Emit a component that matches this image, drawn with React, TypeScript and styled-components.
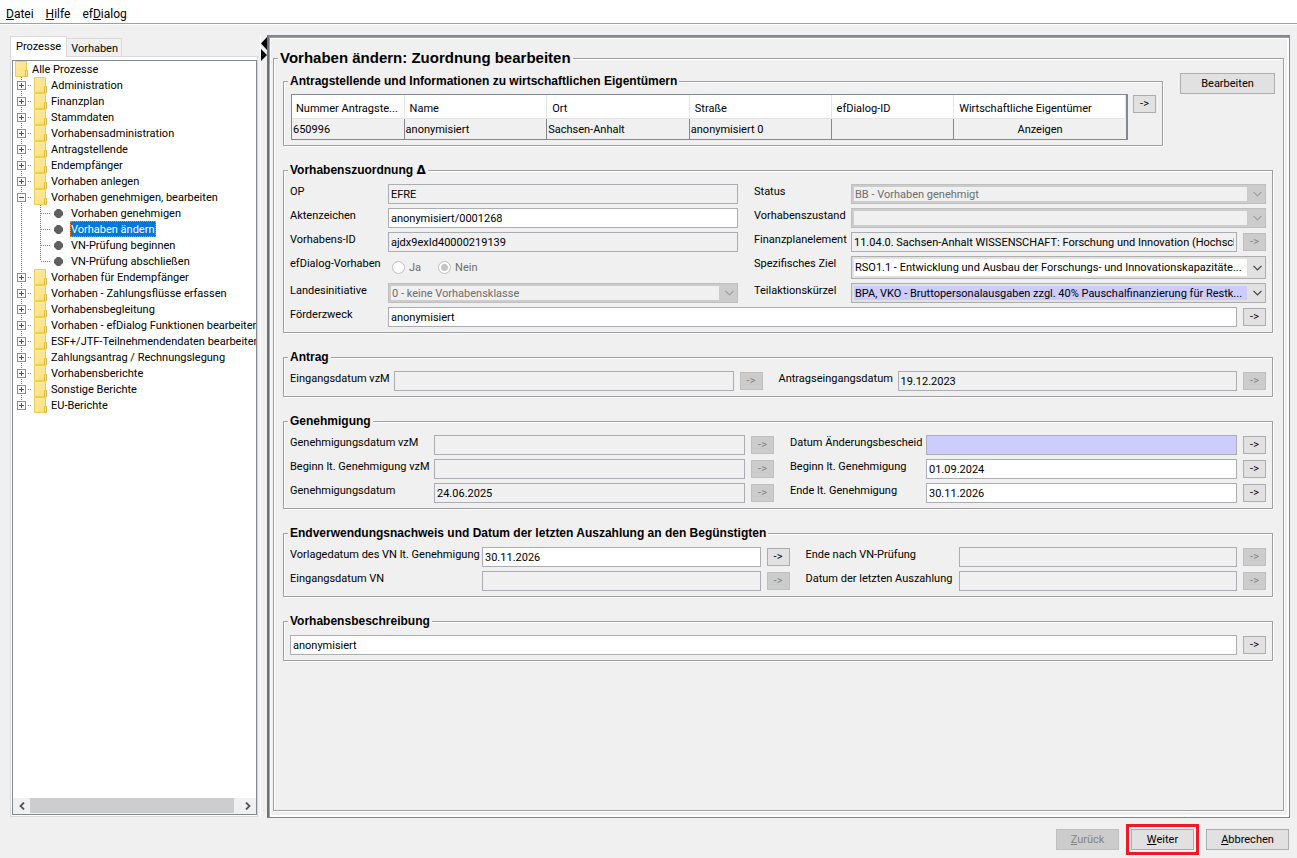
import React from "react";
import styled, { createGlobalStyle, css } from "styled-components";

const GlobalStyle = createGlobalStyle`
  *, *::before, *::after { box-sizing: border-box; }
  body {
    margin: 0;
    background: #f0f0f0;
    color: #000;
    font-family: Roboto, "Liberation Sans", sans-serif;
    font-size: 11px;
    line-height: 14px;
  }
  button, input, select, table { font: inherit; color: inherit; }
`;

/* ---------- window frame ---------- */

const Window = styled.div`
  display: flex;
  flex-direction: column;
  min-height: 100vh;
`;

const MenuBar = styled.nav`
  display: flex;
  gap: 12px;
  height: 24px;
  padding: 4px 6px 0;
  background: #fff;
  border-bottom: 1px solid #a0a0a0;
  box-shadow: 0 1px 0 #fff;
`;

const MenuItem = styled.button`
  padding: 0;
  border: 0;
  background: none;
  font-size: 12px;
  line-height: 20px;
`;

const Workspace = styled.main`
  flex: 1;
  display: flex;
  padding: 11px 7px 0 10px;
`;

const Footer = styled.footer`
  display: flex;
  justify-content: flex-end;
  gap: 12px;
  padding: 11px 8px 8px;
`;

/* ---------- buttons ---------- */

const Button = styled.button<{ $width: number; $marked?: boolean }>`
  width: ${(p) => p.$width}px;
  height: 21px;
  padding: 0;
  flex: none;
  background: #e1e1e1;
  border: 1px solid #adadad;
  ${(p) =>
    p.$marked &&
    css`
      outline: 3px solid #ed1c24;
      outline-offset: 2px;
    `}
  &:disabled {
    background: #ccc;
    border-color: #bfbfbf;
    color: #838383;
  }
`;

const ArrowButton = styled(Button).attrs({ $width: 23, children: "->" })`
  height: 18px;
  line-height: 14px;
`;

/* ---------- navigation tree ---------- */

const Sidebar = styled.aside`
  display: flex;
  flex-direction: column;
  width: 248px;
  flex: none;
  margin: 1px 0 1px;
`;

const Tabs = styled.div`
  display: flex;
  align-items: flex-end;
  height: 20px;
`;

const Tab = styled.button<{ $active?: boolean }>`
  height: ${(p) => (p.$active ? 21 : 18)}px;
  margin-bottom: ${(p) => (p.$active ? -1 : 0)}px;
  padding: ${(p) => (p.$active ? "0 5px 1px" : "2px 3px 0 4px")};
  border: 1px solid #d9d9d9;
  border-bottom: 0;
  border-left-width: ${(p) => (p.$active ? 1 : 0)}px;
  background: ${(p) => (p.$active ? "#fff" : "#f0f0f0")};
  z-index: ${(p) => (p.$active ? 1 : 0)};
`;

const TabPane = styled.div`
  flex: 1;
  display: flex;
  padding: 3px 0 1px 1px;
  background: #fff;
  border: 1px solid #d9d9d9;
`;

const TreeFrame = styled.div`
  flex: 1;
  min-width: 0;
  display: flex;
  flex-direction: column;
  border: 1px solid #828790;
  background: #fff;
`;

const Tree = styled.ul`
  flex: 1;
  margin: 0;
  padding: 0;
  list-style: none;
  overflow: hidden;
`;

const Branch = styled.ul`
  margin: 0;
  padding: 0;
  list-style: none;
`;

const TreeRow = styled.div`
  display: flex;
  align-items: center;
  height: 16px;
  white-space: nowrap;
  svg { flex: none; }
`;

const TreeText = styled.span`
  padding: 2px 3px 0 4px;
`;

const LeafText = styled.span<{ $selected?: boolean }>`
  margin-left: 6px;
  padding: 2px 1px 0;
  ${(p) =>
    p.$selected &&
    css`
      background: #0078d7;
      color: #fff;
      outline: 1px dotted #ff8728;
      outline-offset: -1px;
    `}
`;

const ScrollBar = styled.div`
  display: flex;
  height: 16px;
  background: #f0f0f0;
`;

const ScrollButton = styled.button`
  display: grid;
  place-items: center;
  width: 17px;
  padding: 0;
  border: 0;
  background: none;
`;

const ScrollTrack = styled.div`
  flex: 1;
  padding-right: 5px;
`;

const ScrollThumb = styled.div`
  height: 15px;
  background: #cdcdcd;
`;

const Divider = styled.div`
  width: 9px;
  flex: none;
  padding-left: 2px;
  svg { display: block; }
`;

const DividerLine = styled.div`
  height: 100%;
  border-left: 1px solid #fff;
`;

/* ---------- group boxes and form parts ---------- */

const Panel = styled.section`
  flex: 1;
  min-width: 0;
  display: flex;
  padding: 12px 5px 6px 4px;
  border: 1px solid #828790;
  border-top-width: 2px;
  border-left: 2px solid #6e7177;
  box-shadow: inset 1px 1px 0 #a0a0a8, inset 2px 2px 0 #fff, inset -2px -2px 0 #fff;
`;

const Group = styled.fieldset<{ $tight?: boolean }>`
  min-width: 0;
  margin: 0;
  padding: ${(p) => (p.$tight ? 5 : 6)}px 6px 5px;
  border: 1px solid #a0a0a0;
  box-shadow: 1px 1px 0 #fff, inset 1px 1px 0 #fff;
`;

const GroupTitle = styled.legend`
  padding: 1px 2px 0;
  margin-left: -2px;
  background: #f0f0f0;
  font: bold 12px/15px "Liberation Sans", Arial, sans-serif;
`;

const Delta = styled.span`
  font-family: "DejaVu Sans", sans-serif;
  line-height: 1;
`;

const Page = styled(Group)`
  flex: 1;
  padding: 6px 8px 8px 9px;
`;

const PageTitle = styled(GroupTitle)`
  margin-left: -5px;
  padding-top: 0;
  font-size: 15px;
  line-height: 18px;
`;

const PageContent = styled.div`
  display: flex;
  flex-direction: column;
  gap: 16px;
`;

const TopRow = styled.div`
  display: flex;
  align-items: flex-start;
  gap: 17px;
  & > fieldset { flex: 1; }
`;

const Wide = styled.div`
  display: flex;
  flex-direction: column;
  gap: 16px;
  margin-right: 2px;
`;

const FieldGrid = styled.div<{ $columns: string }>`
  display: grid;
  grid-template-columns: ${(p) => p.$columns};
  row-gap: 4px;
`;

const Label = styled.label<{ $second?: boolean }>`
  padding-top: 1px;
  padding-left: ${(p) => (p.$second ? 16 : 0)}px;
  white-space: nowrap;
`;

const Caption = styled(Label).attrs({ as: "span" })``;

const FieldBox = styled.div<{ $span?: number }>`
  display: flex;
  align-items: center;
  gap: 6px;
  min-width: 0;
  height: 20px;
  grid-column: span ${(p) => p.$span ?? 1};
`;

const TextInput = styled.input<{ $required?: boolean }>`
  flex: 1;
  min-width: 0;
  height: 20px;
  padding: 0 2px;
  border: 1px solid #abadb3;
  border-radius: 0;
  background: ${(p) => (p.$required ? "#ccccff" : "#fff")};
  &:read-only { background: #f0f0f0; }
`;

const ComboBox = styled.div<{ $tall?: boolean }>`
  display: grid;
  min-width: 0;
  height: ${(p) => (p.$tall ? 23 : 20)}px;
  svg {
    grid-area: 1 / 1;
    place-self: center end;
    margin-right: 4px;
    pointer-events: none;
  }
`;

const Select = styled.select<{ $fill: string }>`
  grid-area: 1 / 1;
  appearance: none;
  min-width: 0;
  width: 100%;
  padding: 1px 19px 0 3px;
  border: 1px solid #adadad;
  border-radius: 0;
  background:
    linear-gradient(${(p) => p.$fill}, ${(p) => p.$fill}) 2px 2px / calc(100% - 20px) calc(100% - 4px) no-repeat,
    #e1e1e1;
  &:disabled {
    opacity: 1;
    border-color: #bfbfbf;
    background-color: #ccc;
    color: #6d6d6d;
  }
`;

const RadioRow = styled.div`
  display: flex;
  align-items: center;
  gap: 17px;
  height: 23px;
  padding-left: 4px;
`;

const RadioLabel = styled.label`
  display: flex;
  align-items: center;
  gap: 4px;
  color: #6d6d6d;
`;

const Radio = styled.input`
  appearance: none;
  width: 13px;
  height: 13px;
  margin: 0;
  border: 1px solid #bfbfbf;
  border-radius: 50%;
  background: #fff;
  &:checked { background: radial-gradient(circle, #c3c3c3 3px, #fff 4px); }
`;

/* ---------- applicant table ---------- */

const TableRow = styled.div`
  display: flex;
  align-items: flex-start;
  gap: 5px;
  margin-left: 1px;
  & > button { margin: 1px 0 0; }
`;

const Table = styled.table`
  flex: 1;
  table-layout: fixed;
  width: 100%;
  height: 46px;
  border: 1px solid #828790;
  border-right-width: 2px;
  border-spacing: 0;
  th {
    height: 24px;
    padding: 4px 3px 0 4px;
    background: #fff;
    border-right: 1px solid #e5e5e5;
    border-bottom: 1px solid #e5e5e5;
    font-weight: normal;
    text-align: left;
    white-space: nowrap;
    overflow: hidden;
    text-overflow: ellipsis;
  }
  th + th { padding-left: 5px; }
  td {
    height: 20px;
    padding: 2px 1px 0;
    border-right: 1px solid #828790;
  }
  td:last-child { border-right: 0; text-align: center; }
`;

/* ---------- drawings ---------- */

const Folder = () => (
  <svg width="13" height="16" viewBox="0 0 13 16">
    <defs>
      <linearGradient id="folderFill" x1="0" y1="0" x2="1" y2="1">
        <stop offset="0" stopColor="#ffeaa6" />
        <stop offset="1" stopColor="#ffe07c" />
      </linearGradient>
    </defs>
    <path d="M.5.5h11v15H.5z" fill="url(#folderFill)" stroke="#efcd58" />
    <path d="M10.5 15.5v-6h2v6z" fill="#ffe58e" stroke="#e8bd3c" />
  </svg>
);

const Rail = ({ box, last }: { box?: "plus" | "minus"; last?: boolean }) => (
  <svg width="21" height="16" viewBox="0 0 21 16" shapeRendering="crispEdges">
    <path d={last ? "M8.5 0v8" : "M8.5 0v16"} stroke="#808080" strokeDasharray="1 1" />
    {box && (
      <>
        <path d="M15 8.5h3" stroke="#808080" strokeDasharray="1 1" />
        <rect x="4.5" y="4.5" width="8" height="8" fill="#f7f7f7" stroke="#919191" />
        <path d={box === "plus" ? "M6 8.5h5M8.5 6v5" : "M6 8.5h5"} stroke="#2f4f9f" />
      </>
    )}
  </svg>
);

const LeafRail = ({ last }: { last?: boolean }) => (
  <svg width="20" height="16" viewBox="0 0 20 16">
    <g shapeRendering="crispEdges" stroke="#808080" strokeDasharray="1 1">
      <path d={last ? "M6.5 0v8" : "M6.5 0v16"} />
      <path d="M7 8.5h9" />
    </g>
  </svg>
);

const Bullet = () => (
  <svg width="10" height="16" viewBox="0 0 10 16">
    <path d="M3 4h3l3 3v3l-3 3H3l-3-3V7z" fill="#606060" />
  </svg>
);

const Chevron = ({ color }: { color: string }) => (
  <svg width="9" height="6" viewBox="0 0 9 6">
    <path d="M.5.8l4 4 4-4" fill="none" stroke={color} strokeWidth="1.2" />
  </svg>
);

const ScrollArrow = ({ right }: { right?: boolean }) => (
  <svg width="6" height="8" viewBox="0 0 6 8">
    <path d={right ? "M1 .5l3.5 3.5L1 7.5" : "M5 .5L1.5 4 5 7.5"} fill="none" stroke="#555" strokeWidth="1.8" />
  </svg>
);

const DividerArrows = () => (
  <svg width="6" height="26" viewBox="0 0 6 26">
    <path d="M6 2v13L0 8.5zM0 14v12l6-6z" fill="#000" />
  </svg>
);

/* ---------- composed controls ---------- */

type FieldProps = {
  id: string;
  label?: string;
  value?: string;
  locked?: boolean;
  required?: boolean;
  second?: boolean;
  span?: number;
  arrow?: "on" | "off";
};

const Field = ({ id, label, value = "", locked, required, second, span, arrow }: FieldProps) => (
  <>
    {label && <Label htmlFor={id} $second={second}>{label}</Label>}
    <FieldBox $span={span}>
      <TextInput id={id} defaultValue={value} readOnly={locked} $required={required} aria-label={label ? undefined : "Vorhabensbeschreibung"} />
      {arrow && <ArrowButton disabled={arrow === "off"} />}
    </FieldBox>
  </>
);

type ComboProps = {
  id: string;
  label: string;
  value?: string;
  disabled?: boolean;
  fill?: string;
  second?: boolean;
  tall?: boolean;
};

const Combo = ({ id, label, value, disabled, fill = "#fff", second, tall }: ComboProps) => (
  <>
    <Label htmlFor={id} $second={second}>{label}</Label>
    <ComboBox $tall={tall}>
      <Select id={id} disabled={disabled} $fill={disabled ? "#f0f0f0" : fill}>
        {value && <option>{value}</option>}
      </Select>
      <Chevron color={disabled ? "#a0a0a0" : "#404040"} />
    </ComboBox>
  </>
);

type Node = { name: string; leaves?: string[] };

const nodes: Node[] = [
  { name: "Administration" },
  { name: "Finanzplan" },
  { name: "Stammdaten" },
  { name: "Vorhabensadministration" },
  { name: "Antragstellende" },
  { name: "Endempfänger" },
  { name: "Vorhaben anlegen" },
  {
    name: "Vorhaben genehmigen, bearbeiten",
    leaves: ["Vorhaben genehmigen", "Vorhaben ändern", "VN-Prüfung beginnen", "VN-Prüfung abschließen"],
  },
  { name: "Vorhaben für Endempfänger" },
  { name: "Vorhaben - Zahlungsflüsse erfassen" },
  { name: "Vorhabensbegleitung" },
  { name: "Vorhaben - efDialog Funktionen bearbeiten" },
  { name: "ESF+/JTF-Teilnehmendendaten bearbeiten" },
  { name: "Zahlungsantrag / Rechnungslegung" },
  { name: "Vorhabensberichte" },
  { name: "Sonstige Berichte" },
  { name: "EU-Berichte" },
];

const RootRow = styled(TreeRow)`
  padding-left: 2px;
`;

const Navigation = () => (
  <Sidebar>
    <Tabs role="tablist">
      <Tab role="tab" aria-selected $active>Prozesse</Tab>
      <Tab role="tab" aria-selected={false}>Vorhaben</Tab>
    </Tabs>
    <TabPane>
      <TreeFrame>
        <Tree>
          <li>
            <RootRow><Folder /><TreeText>Alle Prozesse</TreeText></RootRow>
            <Branch>
              {nodes.map((node, i) => (
                <li key={node.name}>
                  <TreeRow>
                    <Rail box={node.leaves ? "minus" : "plus"} last={i === nodes.length - 1} />
                    <Folder />
                    <TreeText>{node.name}</TreeText>
                  </TreeRow>
                  {node.leaves && (
                    <Branch>
                      {node.leaves.map((leaf, j) => (
                        <li key={leaf}>
                          <TreeRow>
                            <Rail />
                            <LeafRail last={j === node.leaves!.length - 1} />
                            <Bullet />
                            <LeafText $selected={leaf === "Vorhaben ändern"}>{leaf}</LeafText>
                          </TreeRow>
                        </li>
                      ))}
                    </Branch>
                  )}
                </li>
              ))}
            </Branch>
          </li>
        </Tree>
        <ScrollBar>
          <ScrollButton aria-label="Nach links"><ScrollArrow /></ScrollButton>
          <ScrollTrack><ScrollThumb /></ScrollTrack>
          <ScrollButton aria-label="Nach rechts"><ScrollArrow right /></ScrollButton>
        </ScrollBar>
      </TreeFrame>
    </TabPane>
  </Sidebar>
);

const Applicants = () => (
  <Group $tight>
    <GroupTitle>Antragstellende und Informationen zu wirtschaftlichen Eigentümern</GroupTitle>
    <TableRow>
      <Table>
        <colgroup>
          <col style={{ width: "13.5%" }} />
          <col style={{ width: "17.1%" }} />
          <col style={{ width: "17.1%" }} />
          <col style={{ width: "17%" }} />
          <col style={{ width: "14.7%" }} />
          <col />
        </colgroup>
        <thead>
          <tr>
            <th>Nummer Antragste...</th>
            <th>Name</th>
            <th>Ort</th>
            <th>Straße</th>
            <th>efDialog-ID</th>
            <th>Wirtschaftliche Eigentümer</th>
          </tr>
        </thead>
        <tbody>
          <tr>
            <td>650996</td>
            <td>anonymisiert</td>
            <td>Sachsen-Anhalt</td>
            <td>anonymisiert 0</td>
            <td />
            <td>Anzeigen</td>
          </tr>
        </tbody>
      </Table>
      <ArrowButton />
    </TableRow>
  </Group>
);

const Assignment = () => (
  <Group>
    <GroupTitle>Vorhabenszuordnung <Delta>Δ</Delta></GroupTitle>
    <FieldGrid $columns="98px minmax(0, 350fr) 113px minmax(0, 415fr)">
      <Field id="op" label="OP" value="EFRE" locked />
      <Combo id="status" label="Status" value="BB - Vorhaben genehmigt" disabled second />
      <Field id="az" label="Aktenzeichen" value="anonymisiert/0001268" />
      <Combo id="zustand" label="Vorhabenszustand" disabled second />
      <Field id="vid" label="Vorhabens-ID" value="ajdx9exId40000219139" locked />
      <Field
        id="fpe"
        label="Finanzplanelement"
        value="11.04.0. Sachsen-Anhalt WISSENSCHAFT: Forschung und Innovation (Hochschulen)"
        locked
        second
        arrow="off"
      />
      <Caption>efDialog-Vorhaben</Caption>
      <RadioRow role="radiogroup" aria-label="efDialog-Vorhaben">
        <RadioLabel><Radio type="radio" name="efd" disabled />Ja</RadioLabel>
        <RadioLabel><Radio type="radio" name="efd" disabled defaultChecked />Nein</RadioLabel>
      </RadioRow>
      <Combo
        id="ziel"
        label="Spezifisches Ziel"
        value="RSO1.1 - Entwicklung und Ausbau der Forschungs- und Innovationskapazitäte..."
        second
        tall
      />
      <Combo id="landes" label="Landesinitiative" value="0 - keine Vorhabensklasse" disabled />
      <Combo
        id="teil"
        label="Teilaktionskürzel"
        value="BPA, VKO - Bruttopersonalausgaben zzgl. 40% Pauschalfinanzierung für Restk..."
        fill="#ccccff"
        second
      />
      <Field id="zweck" label="Förderzweck" value="anonymisiert" span={3} arrow="on" />
    </FieldGrid>
  </Group>
);

const Application = () => (
  <Group>
    <GroupTitle>Antrag</GroupTitle>
    <FieldGrid $columns="104px minmax(0, 1fr) 135px minmax(0, 1fr)">
      <Field id="eingang" label="Eingangsdatum vzM" locked arrow="off" />
      <Field id="antrag" label="Antragseingangsdatum" value="19.12.2023" locked second arrow="off" />
    </FieldGrid>
  </Group>
);

const Approval = () => (
  <Group>
    <GroupTitle>Genehmigung</GroupTitle>
    <FieldGrid $columns="144px minmax(0, 1fr) 152px minmax(0, 1fr)">
      <Field id="gvzm" label="Genehmigungsdatum vzM" locked arrow="off" />
      <Field id="aend" label="Datum Änderungsbescheid" required second arrow="on" />
      <Field id="bvzm" label="Beginn lt. Genehmigung vzM" locked arrow="off" />
      <Field id="beginn" label="Beginn lt. Genehmigung" value="01.09.2024" second arrow="on" />
      <Field id="gdat" label="Genehmigungsdatum" value="24.06.2025" locked arrow="off" />
      <Field id="ende" label="Ende lt. Genehmigung" value="30.11.2026" second arrow="on" />
    </FieldGrid>
  </Group>
);

const FinalProof = () => (
  <Group>
    <GroupTitle>Endverwendungsnachweis und Datum der letzten Auszahlung an den Begünstigten</GroupTitle>
    <FieldGrid $columns="192px minmax(0, 1fr) 169px minmax(0, 1fr)">
      <Field id="vorlage" label="Vorlagedatum des VN lt. Genehmigung" value="30.11.2026" arrow="on" />
      <Field id="endevn" label="Ende nach VN-Prüfung" locked second arrow="off" />
      <Field id="evn" label="Eingangsdatum VN" locked arrow="off" />
      <Field id="ausz" label="Datum der letzten Auszahlung" locked second arrow="off" />
    </FieldGrid>
  </Group>
);

export default function App() {
  return (
    <Window>
      <GlobalStyle />
      <MenuBar>
        <MenuItem><u>D</u>atei</MenuItem>
        <MenuItem><u>H</u>ilfe</MenuItem>
        <MenuItem>ef<u>D</u>ialog</MenuItem>
      </MenuBar>
      <Workspace>
        <Navigation />
        <Divider>
          <DividerLine><DividerArrows /></DividerLine>
        </Divider>
        <Panel>
          <Page>
            <PageTitle>Vorhaben ändern: Zuordnung bearbeiten</PageTitle>
            <PageContent>
              <TopRow>
                <Applicants />
                <Button $width={95}>Bearbeiten</Button>
              </TopRow>
              <Wide>
                <Assignment />
                <Application />
                <Approval />
                <FinalProof />
                <Group>
                  <GroupTitle>Vorhabensbeschreibung</GroupTitle>
                  <Field id="beschreibung" value="anonymisiert" arrow="on" />
                </Group>
              </Wide>
            </PageContent>
          </Page>
        </Panel>
      </Workspace>
      <Footer>
        <Button $width={63} disabled><u>Z</u>urück</Button>
        <Button $width={63} $marked><u>W</u>eiter</Button>
        <Button $width={83}><u>A</u>bbrechen</Button>
      </Footer>
    </Window>
  );
}
